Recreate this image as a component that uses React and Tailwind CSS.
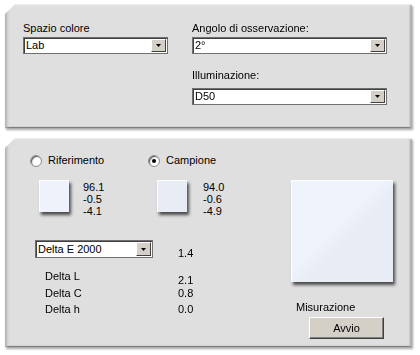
import React from "react";

function Arrow() {
  return (
    <svg width="5" height="3" viewBox="0 0 5 3">
      <path d="M0 0h5L2.5 3z" fill="#000" />
    </svg>
  );
}

function Select({ value, className = "", tall }) {
  return (
    <div
      className={`flex items-stretch border border-[#6f6f6f] bg-white shadow-[inset_1px_1px_0_#404040] ${
        tall ? "h-[18px]" : "h-[17px]"
      } ${className}`}
    >
      <span className="flex-1 self-center pl-[2px] leading-[13px]">{value}</span>
      <span className="m-[1px] flex w-[15px] items-center justify-center border border-t-white border-l-white border-r-[#404040] border-b-[#404040] bg-[#d4d0c8]">
        <Arrow />
      </span>
    </div>
  );
}

function Radio({ checked, label, className = "" }) {
  return (
    <div className={`flex items-center gap-[6px] ${className}`}>
      <span className="flex h-[12px] w-[12px] items-center justify-center rounded-full border border-[#8a8a8a] bg-white shadow-[inset_1px_1px_1px_#555]">
        {checked && <span className="h-[4px] w-[4px] rounded-full bg-black" />}
      </span>
      <span>{label}</span>
    </div>
  );
}

function Swatch({ color }) {
  return (
    <div
      className={`h-[32px] w-[30px] shrink-0 border-t border-l border-white shadow-[2px_3px_3px_#4a4a4a] ${color}`}
    />
  );
}

function Panel({ className = "", children }) {
  return (
    <div className={`drop-shadow-[1px_2px_1px_rgba(0,0,0,0.35)] ${className}`}>
      <div className="h-full bg-[#dfdfdf] [clip-path:polygon(10px_0,100%_0,100%_100%,0_100%,0_10px)] shadow-[inset_4px_0_3px_-2px_#b0b0b0,inset_0_2px_2px_-1px_#f4f4f4,inset_-3px_0_2px_-1px_#a5a5a5,inset_0_-2px_1px_-1px_#6f6f6f]">
        {children}
      </div>
    </div>
  );
}

export default function App() {
  return (
    <div className="h-[355px] w-[420px] overflow-hidden bg-white pl-[5px] pt-[4px] font-['Liberation_Sans',Arial,sans-serif] text-[11px] leading-[13px] text-black">
      {/* Top panel */}
      <Panel className="h-[124px] w-[407px]">
        <div className="flex gap-[24px] pl-[18px] pt-[18px]">
          <div className="w-[145px]">
            <p>Spazio colore</p>
            <Select value="Lab" className="mt-[2px]" />
          </div>
          <div className="w-[195px]">
            <p>Angolo di osservazione:</p>
            <Select value="2°" className="mt-[2px]" />
            <p className="mt-[15px]">Illuminazione:</p>
            <Select value="D50" className="mt-[6px]" />
          </div>
        </div>
      </Panel>

      {/* Bottom panel */}
      <Panel className="mt-[10px] h-[209px] w-[407px]">
        <div className="flex">
          <div className="w-[280px]">
            <div className="mt-[16px] flex h-[13px] pl-[25px]">
              <Radio label="Riferimento" className="w-[118px]" />
              <Radio label="Campione" checked />
            </div>

            <div className="mt-[13px] flex h-[36px] pl-[34px]">
              <div className="flex w-[118px] items-start">
                <Swatch color="bg-[#eef2fa]" />
                <div className="ml-[14px] mt-[1px] leading-[12px]">
                  <p>96.1</p>
                  <p>-0.5</p>
                  <p>-4.1</p>
                </div>
              </div>
              <div className="flex items-start">
                <Swatch color="bg-[#e8ecf4]" />
                <div className="ml-[16px] mt-[1px] leading-[12px]">
                  <p>94.0</p>
                  <p>-0.6</p>
                  <p>-4.9</p>
                </div>
              </div>
            </div>

            <div className="mt-[24px] flex items-start pl-[30px]">
              <Select value="Delta E 2000" tall className="w-[118px]" />
              <span className="ml-[25px] mt-[7px]">1.4</span>
            </div>

            <div className="mt-[10px] pl-[40px]">
              <div className="flex h-[16.5px] items-start">
                <span className="w-[133px]">Delta L</span>
                <span className="mt-[4px]">2.1</span>
              </div>
              <div className="flex h-[16.5px] items-start">
                <span className="w-[133px]">Delta C</span>
                <span>0.8</span>
              </div>
              <div className="flex h-[16.5px] items-start">
                <span className="w-[133px]">Delta h</span>
                <span>0.0</span>
              </div>
            </div>
          </div>

          <div className="pl-[6px] pt-[42px]">
            <div className="h-[102px] w-[102px] border-t border-l border-white bg-[linear-gradient(to_bottom_right,#eff3fc_44%,#ebeff8_50%,#e8ecf4_56%)] shadow-[2px_3px_3px_#4a4a4a]" />
            <p className="ml-[5px] mt-[19px]">Misurazione</p>
            <button className="ml-[18px] mt-[3px] flex h-[22px] w-[75px] items-center justify-center border border-t-white border-l-white border-r-[#404040] border-b-[#404040] bg-[#d4d0c8] shadow-[inset_-1px_-1px_0_#808080]">
              Avvio
            </button>
          </div>
        </div>
      </Panel>
    </div>
  );
}
